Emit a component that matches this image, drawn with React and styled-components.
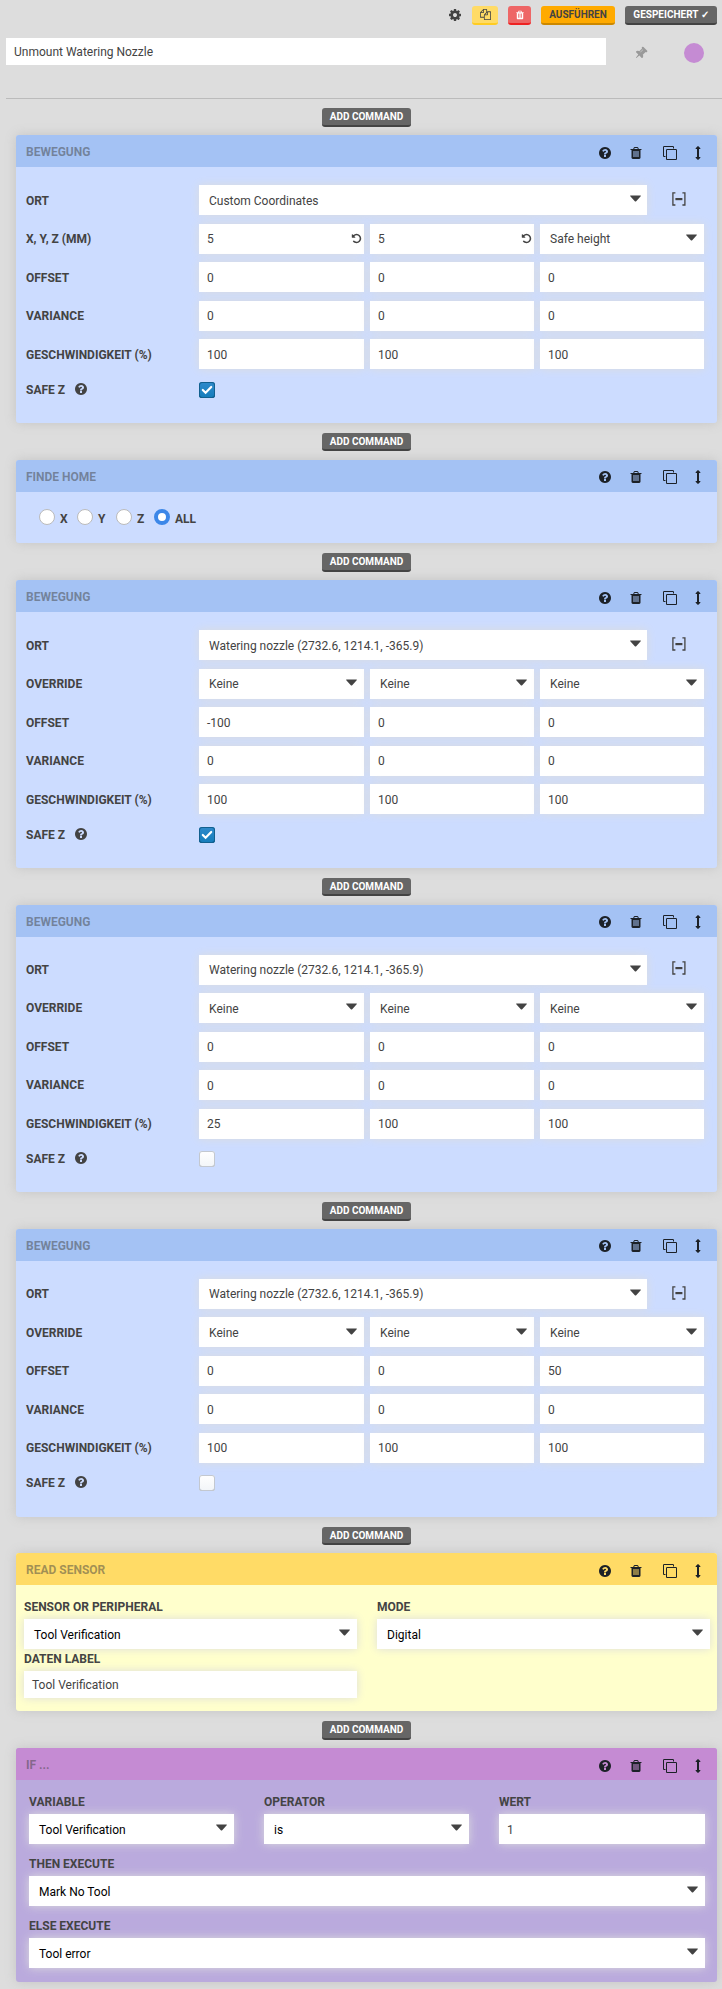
import React from 'react';
import styled, { createGlobalStyle } from 'styled-components';

const GlobalStyle = createGlobalStyle`
  *, *::before, *::after { box-sizing: border-box; }
  body {
    margin: 0;
    background: #ddd;
    color: #434343;
    font-family: Roboto, "Liberation Sans", sans-serif;
    font-size: 12px;
    line-height: 16px;
  }
`;

const ICONS = {
  cog: 'M1152 896q0-106-75-181t-181-75-181 75-75 181 75 181 181 75 181-75 75-181zm512-109v222q0 12-8 23t-20 13l-185 28q-19 54-39 91 35 50 107 138 10 12 10 25t-9 23q-27 37-99 108t-94 71q-12 0-26-9l-138-108q-44 23-91 38-16 136-29 186-7 28-36 28h-222q-14 0-24.5-8.5t-11.5-21.5l-28-184q-49-16-90-37l-141 107q-10 9-25 9-14 0-25-11-126-114-165-168-7-10-7-23 0-12 8-23 15-21 51-66.5t54-70.5q-27-50-41-99l-183-27q-13-2-21-12.5t-8-23.5v-222q0-12 8-23t19-13l186-28q14-46 39-92-40-57-107-138-10-12-10-24 0-10 9-23 26-36 98.5-107.5t94.5-71.5q13 0 26 10l138 107q44-23 91-38 16-136 29-186 7-28 36-28h222q14 0 24.5 8.5t11.5 21.5l28 184q49 16 90 37l142-107q9-9 24-9 13 0 25 10 129 119 165 170 7 8 7 22 0 12-8 23-15 21-51 66.5t-54 70.5q26 50 41 98l183 28q13 2 21 12.5t8 23.5z',
  help: 'M1024 1376v-192q0-14-9-23t-23-9h-192q-14 0-23 9t-9 23v192q0 14 9 23t23 9h192q14 0 23-9t9-23zm256-672q0-88-55.5-163t-138.5-116-170-41q-243 0-371 213-15 24 8 42l132 100q7 6 19 6 16 0 25-12 53-68 86-92 34-24 86-24 48 0 85.5 26t37.5 59q0 38-20 61t-68 45q-63 28-115.5 86.5t-52.5 125.5v36q0 14 9 23t23 9h192q14 0 23-9t9-23q0-19 21.5-49.5t54.5-49.5q32-18 49-28.5t46-35 44.5-48 28-60.5 12.5-81zm384 192q0 209-103 385.5t-279.5 279.5-385.5 103-385.5-103-279.5-279.5-103-385.5 103-385.5 279.5-279.5 385.5-103 385.5 103 279.5 279.5 103 385.5z',
  trash: 'M704 1376v-704q0-14-9-23t-23-9h-64q-14 0-23 9t-9 23v704q0 14 9 23t23 9h64q14 0 23-9t9-23zm256 0v-704q0-14-9-23t-23-9h-64q-14 0-23 9t-9 23v704q0 14 9 23t23 9h64q14 0 23-9t9-23zm256 0v-704q0-14-9-23t-23-9h-64q-14 0-23 9t-9 23v704q0 14 9 23t23 9h64q14 0 23-9t9-23zm-544-992h448l-48-117q-7-9-17-11h-317q-10 2-17 11zm928 32v64q0 14-9 23t-23 9h-96v948q0 83-47 143.5t-113 60.5h-832q-66 0-113-58.5t-47-141.5v-952h-96q-14 0-23-9t-9-23v-64q0-14 9-23t23-9h309l70-167q15-37 54-63t79-26h320q40 0 79 26t54 63l70 167h309q14 0 23 9t9 23z',
  clone: 'M1664 1632v-1088q0-13-9.5-22.5t-22.5-9.5h-1088q-13 0-22.5 9.5t-9.5 22.5v1088q0 13 9.5 22.5t22.5 9.5h1088q13 0 22.5-9.5t9.5-22.5zm128-1088v1088q0 66-47 113t-113 47h-1088q-66 0-113-47t-47-113v-1088q0-66 47-113t113-47h1088q66 0 113 47t47 113zm-384-384v160h-128v-160q0-13-9.5-22.5t-22.5-9.5h-1088q-13 0-22.5 9.5t-9.5 22.5v1088q0 13 9.5 22.5t22.5 9.5h160v128h-160q-66 0-113-47t-47-113v-1088q0-66 47-113t113-47h1088q66 0 113 47t47 113z',
  move: 'M1216 320q0 26-19 45t-45 19h-128v1024h128q26 0 45 19t19 45-19 45l-256 256q-19 19-45 19t-45-19l-256-256q-19-19-19-45t19-45 45-19h128v-1024h-128q-26 0-45-19t-19-45 19-45l256-256q19-19 45-19t45 19l256 256q19 19 19 45z',
  files: 'M1696 384q40 0 68 28t28 68v1216q0 40-28 68t-68 28h-960q-40 0-68-28t-28-68v-288h-544q-40 0-68-28t-28-68v-672q0-40 20-88t48-76l408-408q28-28 76-48t88-20h416q40 0 68 28t28 68v328q68-40 128-40h416zm-544 213l-299 299h299v-299zm-640-384l-299 299h299v-299zm196 647l316-316v-416h-384v416q0 40-28 68t-68 28h-416v640h512v-256q0-40 20-88t48-76zm956 804v-1152h-384v416q0 40-28 68t-68 28h-416v640h896z',
  pin: 'M800 864v-448q0-14-9-23t-23-9-23 9-9 23v448q0 14 9 23t23 9 23-9 9-23zm672 352q0 26-19 45t-45 19h-429l-51 483q-2 12-10.5 20.5t-20.5 8.5h-1q-27 0-32-27l-76-485h-404q-26 0-45-19t-19-45q0-123 78.5-221.5t177.5-98.5v-512q-52 0-90-38t-38-90 38-90 90-38h640q52 0 90 38t38 90-38 90-90 38v512q99 0 177.5 98.5t78.5 221.5z',
  undo: 'M1664 896q0 156-61 298t-164 245-245 164-298 61q-172 0-327-72.5t-264-204.5q-7-10-6.5-22.5t8.5-20.5l137-138q10-9 25-9 16 2 23 12 73 95 179 147t225 52q104 0 198.5-40.5t163.5-109.5 109.5-163.5 40.5-198.5-40.5-198.5-109.5-163.5-163.5-109.5-198.5-40.5q-98 0-188 35.5t-160 101.5l137 138q31 30 14 69-17 40-59 40h-448q-26 0-45-19t-19-45v-448q0-42 40-59 39-17 69 14l130 129q107-101 244.5-156.5t284.5-55.5q156 0 298 61t245 164 164 245 61 298z',
};

const Svg = styled.svg`
  display: block;
  flex: none;
  fill: currentColor;
`;

const Icon = ({ name, size = 14, className }) => (
  <Svg className={className} width={size} height={size} viewBox="0 0 1792 1792">
    <path d={ICONS[name]} />
  </Svg>
);

const Page = styled.main`
  width: 722px;
  height: 1989px;
  overflow: hidden;
  padding: 6px 0 0 6px;
`;

const Toolbar = styled.div`
  display: flex;
  justify-content: flex-end;
  align-items: flex-start;
  gap: 10px;
  height: 32px;
  padding-right: 5px;
`;

const GearSlot = styled.span`
  padding-top: 2px;
`;

const tones = {
  yellow: ['#ffdb66', '#fc2', '#434343'],
  red: ['#ee6666', '#e22', '#fff'],
  orange: ['#ffaa00', '#cc8800', '#434343'],
  gray: ['#666', '#434343', '#fff'],
};

const Button = styled.button`
  display: flex;
  justify-content: center;
  align-items: ${(p) => (p.$icon ? 'center' : 'flex-start')};
  width: ${(p) => p.$width}px;
  height: ${(p) => p.$height || 19}px;
  padding: 0;
  border: 0;
  border-radius: 3px;
  background: ${(p) => tones[p.$tone][0]};
  border-bottom: 2px solid ${(p) => tones[p.$tone][1]};
  color: ${(p) => tones[p.$tone][2]};
  font: bold 10px/18px Roboto, sans-serif;
  text-transform: uppercase;
  white-space: nowrap;
`;

const TitleRow = styled.div`
  display: flex;
  align-items: center;
  height: 27px;
`;

const TitleInput = styled.div`
  width: 600px;
  height: 27px;
  padding: 0 8px;
  background: #fff;
  line-height: 28px;
`;

const PinIcon = styled(Icon)`
  margin: 2px 0 0 28px;
  color: #999;
  transform: rotate(45deg);
`;

const ColorDot = styled.span`
  width: 20px;
  height: 20px;
  margin: 3px 0 0 36px;
  border-radius: 50%;
  background: #c58bd3;
`;

const Divider = styled.hr`
  height: 1px;
  margin: 33px 0 0;
  border: 0;
  background: #bbb;
`;

const AddSlot = styled.div`
  display: flex;
  justify-content: center;
  height: 36.7px;
  width: 721px;
  margin-left: -6px;
  padding: 9.95px 0 0 12px;
`;

const palettes = {
  blue: ['#a4c2f4', '#ccdcff'],
  yellow: ['#ffdb66', '#ffffcc'],
  purple: ['#c58bd3', '#baaadd'],
};

const Card = styled.section`
  width: 701px;
  height: ${(p) => p.$height}px;
  margin-left: 10px;
  border-radius: 3px;
  background: ${(p) => palettes[p.$tone][1]};
  box-shadow: 0 0 12px #c4c4c4;
`;

const CardHeader = styled.header`
  display: flex;
  height: 32px;
  padding: 0 7px 0 10px;
  border-radius: 3px 3px 0 0;
  background: ${(p) => palettes[p.$tone][0]};
`;

const CardTitle = styled.span`
  flex: 1;
  color: rgba(67, 67, 67, 0.5);
  font-weight: bold;
  line-height: 34px;
  text-transform: uppercase;
`;

const HeaderIcons = styled.div`
  display: flex;
  align-items: center;
  height: 14px;
  margin-top: 10.6px;
  color: #1c2127;
`;

const IconSlot = styled.span`
  display: flex;
  justify-content: center;
  width: ${(p) => p.$width}px;
`;

const StepBody = styled.div`
  padding: 18px 13px 0 10px;
`;

const Row = styled.div`
  display: grid;
  grid-template-columns: 173px 1fr;
  height: 38.5px;
`;

const Label = styled.span`
  font-weight: bold;
  line-height: ${(p) => p.$line || 22}px;
  text-transform: uppercase;
`;

const RowLabel = styled(Label)`
  padding-top: 0.38px;
  line-height: 30px;
`;

const Fields = styled.div`
  display: grid;
  grid-template-columns: 165px 164px 164px;
  gap: 6px;
`;

const LocationFields = styled.div`
  display: grid;
  grid-template-columns: 448px 1fr;
`;

const Box = styled.div`
  display: flex;
  justify-content: space-between;
  height: ${(p) => p.$height || 30}px;
  padding: 0.6px ${(p) => p.$end || 2}px 0 ${(p) => (p.$end ? 10 : 8)}px;
  background: #fff;
  color: ${(p) => (p.$dark ? '#000' : 'inherit')};
  line-height: ${(p) => (p.$height ? p.$height - 1 : 30)}px;
  box-shadow: 0 0 10px #ddd;
`;

const Caret = styled.svg`
  display: block;
  width: 11px;
  height: 7px;
  margin-top: 9.6px;
  fill: #434343;
`;

const UndoIcon = styled(Icon)`
  margin-top: 8.6px;
`;

const CollapseIcon = styled.svg`
  display: block;
  margin: 6.8px 0 0 24.8px;
  fill: none;
  stroke: #434343;
`;

const Select = ({ children, dark, end = 6.8 }) => (
  <Box $end={end} $dark={dark}>
    {children}
    <Caret viewBox="0 0 11 7"><path d="M0.6 0.4h9.8q.9 0 .3.8L6.2 6.2q-.7.7-1.4 0L.3 1.2q-.6-.8.3-.8z" /></Caret>
  </Box>
);

const SafeRow = styled.div`
  display: grid;
  grid-template-columns: 173px 1fr;
  padding-top: 3.9px;
`;

const SafeLabel = styled.div`
  display: flex;
  gap: 9px;
  height: 16px;
`;

const Checkbox = styled.span`
  display: flex;
  justify-content: center;
  align-items: center;
  width: 16px;
  height: 16px;
  border-radius: 3px;
  background: ${(p) => (p.$on ? 'linear-gradient(#2f8acb, #147dbb)' : 'linear-gradient(#fff, #f2f5f8)')};
  box-shadow: inset 0 0 0 1px ${(p) => (p.$on ? '#12608f' : '#c3c8d0')}, inset 0 -1px 0 ${(p) => (p.$on ? '#0e5a88' : '#b5b9c0')};
`;

const RadioRow = styled.div`
  display: flex;
  padding: 17px 0 0 23px;
`;

const RadioOption = styled.div`
  display: flex;
  gap: 5px;
  width: ${(p) => p.$width}px;
  font-weight: bold;
  line-height: 20px;
`;

const Radio = styled.span`
  flex: none;
  width: 16px;
  height: 16px;
  border-radius: 50%;
  background: #fff;
  border: ${(p) => (p.$on ? '4px solid #3c87e8' : '1px solid #bbb')};
`;

const SensorBody = styled.div`
  display: grid;
  grid-template-columns: 333px 333px;
  column-gap: 20px;
  padding: 11px 8px 0;
`;

const Field = styled.div`
  display: grid;
  grid-template-rows: ${(p) => p.$labelHeight || 23}px auto;
`;

const IfBody = styled.div`
  display: grid;
  grid-template-columns: 205px 205px 206px;
  column-gap: 30px;
  row-gap: 9px;
  padding: 11px 12px 0 13px;
`;

const WideField = styled(Field)`
  grid-column: 1 / -1;
`;

const StepCard = ({ tone = 'blue', height, title, children }) => (
  <Card $tone={tone} $height={height}>
    <CardHeader $tone={tone}>
      <CardTitle>{title}</CardTitle>
      <HeaderIcons>
        <IconSlot $width={28}><Icon name="help" /></IconSlot>
        <IconSlot $width={34}><Icon name="trash" /></IconSlot>
        <IconSlot $width={33}><Icon name="clone" /></IconSlot>
        <IconSlot $width={24}><Icon name="move" /></IconSlot>
      </HeaderIcons>
    </CardHeader>
    {children}
  </Card>
);

const AddCommand = () => (
  <AddSlot>
    <Button $tone="gray" $width={89} $height={18.6}>Add command</Button>
  </AddSlot>
);

const ValueRow = ({ label, values }) => (
  <Row>
    <RowLabel>{label}</RowLabel>
    <Fields>{values.map((v, i) => <Box key={i}>{v}</Box>)}</Fields>
  </Row>
);

const MoveStep = ({ location, custom, offset, variance = [0, 0, 0], speed, safe }) => (
  <StepCard title="Bewegung" height={287.7}>
    <StepBody>
      <Row>
        <RowLabel>Ort</RowLabel>
        <LocationFields>
          <Select end={6}>{location}</Select>
          <CollapseIcon width="14" height="14" viewBox="0 0 14 14">
            <path d="M3.4 .8H.9v12.2H3.4M10.4 .8h2.5v12.2h-2.5" strokeWidth="1.3" />
            <path d="M3.4 7.1h7" strokeWidth="2.2" />
          </CollapseIcon>
        </LocationFields>
      </Row>
      <Row>
        <RowLabel>{custom ? 'X, Y, Z (mm)' : 'Override'}</RowLabel>
        {custom ? (
          <Fields>
            <Box>5<UndoIcon name="undo" size={11} /></Box>
            <Box>5<UndoIcon name="undo" size={11} /></Box>
            <Select>Safe height</Select>
          </Fields>
        ) : (
          <Fields><Select>Keine</Select><Select>Keine</Select><Select>Keine</Select></Fields>
        )}
      </Row>
      <ValueRow label="Offset" values={offset} />
      <ValueRow label="Variance" values={variance} />
      <ValueRow label="Geschwindigkeit (%)" values={speed} />
      <SafeRow>
        <SafeLabel><Label $line={16}>Safe Z</Label><Icon name="help" /></SafeLabel>
        <Checkbox $on={safe}>
          {safe && (
            <svg width="12" height="10" viewBox="0 0 12 10">
              <path d="M1.8 5l2.8 2.8L10.2 2" fill="none" stroke="#fff" strokeWidth="2.2" strokeLinecap="round" />
            </svg>
          )}
        </Checkbox>
      </SafeRow>
    </StepBody>
  </StepCard>
);

const NOZZLE = 'Watering nozzle (2732.6, 1214.1, -365.9)';

const Commands = styled.div`
  margin-top: -0.5px;
`;

export default function App() {
  return (
    <Page>
      <GlobalStyle />
      <Toolbar>
        <GearSlot><Icon name="cog" /></GearSlot>
        <Button $tone="yellow" $width={26} $icon><Icon name="files" size={11} /></Button>
        <Button $tone="red" $width={23} $icon><Icon name="trash" size={10} /></Button>
        <Button $tone="orange" $width={74}>Ausführen</Button>
        <Button $tone="gray" $width={92}>Gespeichert ✓</Button>
      </Toolbar>
      <TitleRow>
        <TitleInput>Unmount Watering Nozzle</TitleInput>
        <PinIcon name="pin" />
        <ColorDot />
      </TitleRow>
      <Divider />
      <Commands>
        <AddCommand />
        <MoveStep custom safe location="Custom Coordinates" offset={[0, 0, 0]} speed={[100, 100, 100]} />
        <AddCommand />
        <StepCard title="Finde Home" height={83.9}>
          <RadioRow>
            <RadioOption $width={38}><Radio />X</RadioOption>
            <RadioOption $width={39}><Radio />Y</RadioOption>
            <RadioOption $width={38}><Radio />Z</RadioOption>
            <RadioOption $width={50}><Radio $on />ALL</RadioOption>
          </RadioRow>
        </StepCard>
        <AddCommand />
        <MoveStep safe location={NOZZLE} offset={[-100, 0, 0]} speed={[100, 100, 100]} />
        <AddCommand />
        <MoveStep location={NOZZLE} offset={[0, 0, 0]} speed={[25, 100, 100]} />
        <AddCommand />
        <MoveStep location={NOZZLE} offset={[0, 0, 50]} speed={[100, 100, 100]} />
        <AddCommand />
        <StepCard tone="yellow" title="Read Sensor" height={158}>
          <SensorBody>
            <Field><Label>Sensor or Peripheral</Label><Select dark>Tool Verification</Select></Field>
            <Field><Label>Mode</Label><Select dark>Digital</Select></Field>
            <Field $labelHeight={22}><Label $line={20}>Daten Label</Label><Box $height={27}>Tool Verification</Box></Field>
          </SensorBody>
        </StepCard>
        <AddCommand />
        <StepCard tone="purple" title="If ..." height={233.7}>
          <IfBody>
            <Field><Label>Variable</Label><Select dark>Tool Verification</Select></Field>
            <Field><Label>Operator</Label><Select dark>is</Select></Field>
            <Field><Label>Wert</Label><Box>1</Box></Field>
            <WideField><Label>Then execute</Label><Select dark>Mark No Tool</Select></WideField>
            <WideField><Label>Else execute</Label><Select dark>Tool error</Select></WideField>
          </IfBody>
        </StepCard>
      </Commands>
    </Page>
  );
}
